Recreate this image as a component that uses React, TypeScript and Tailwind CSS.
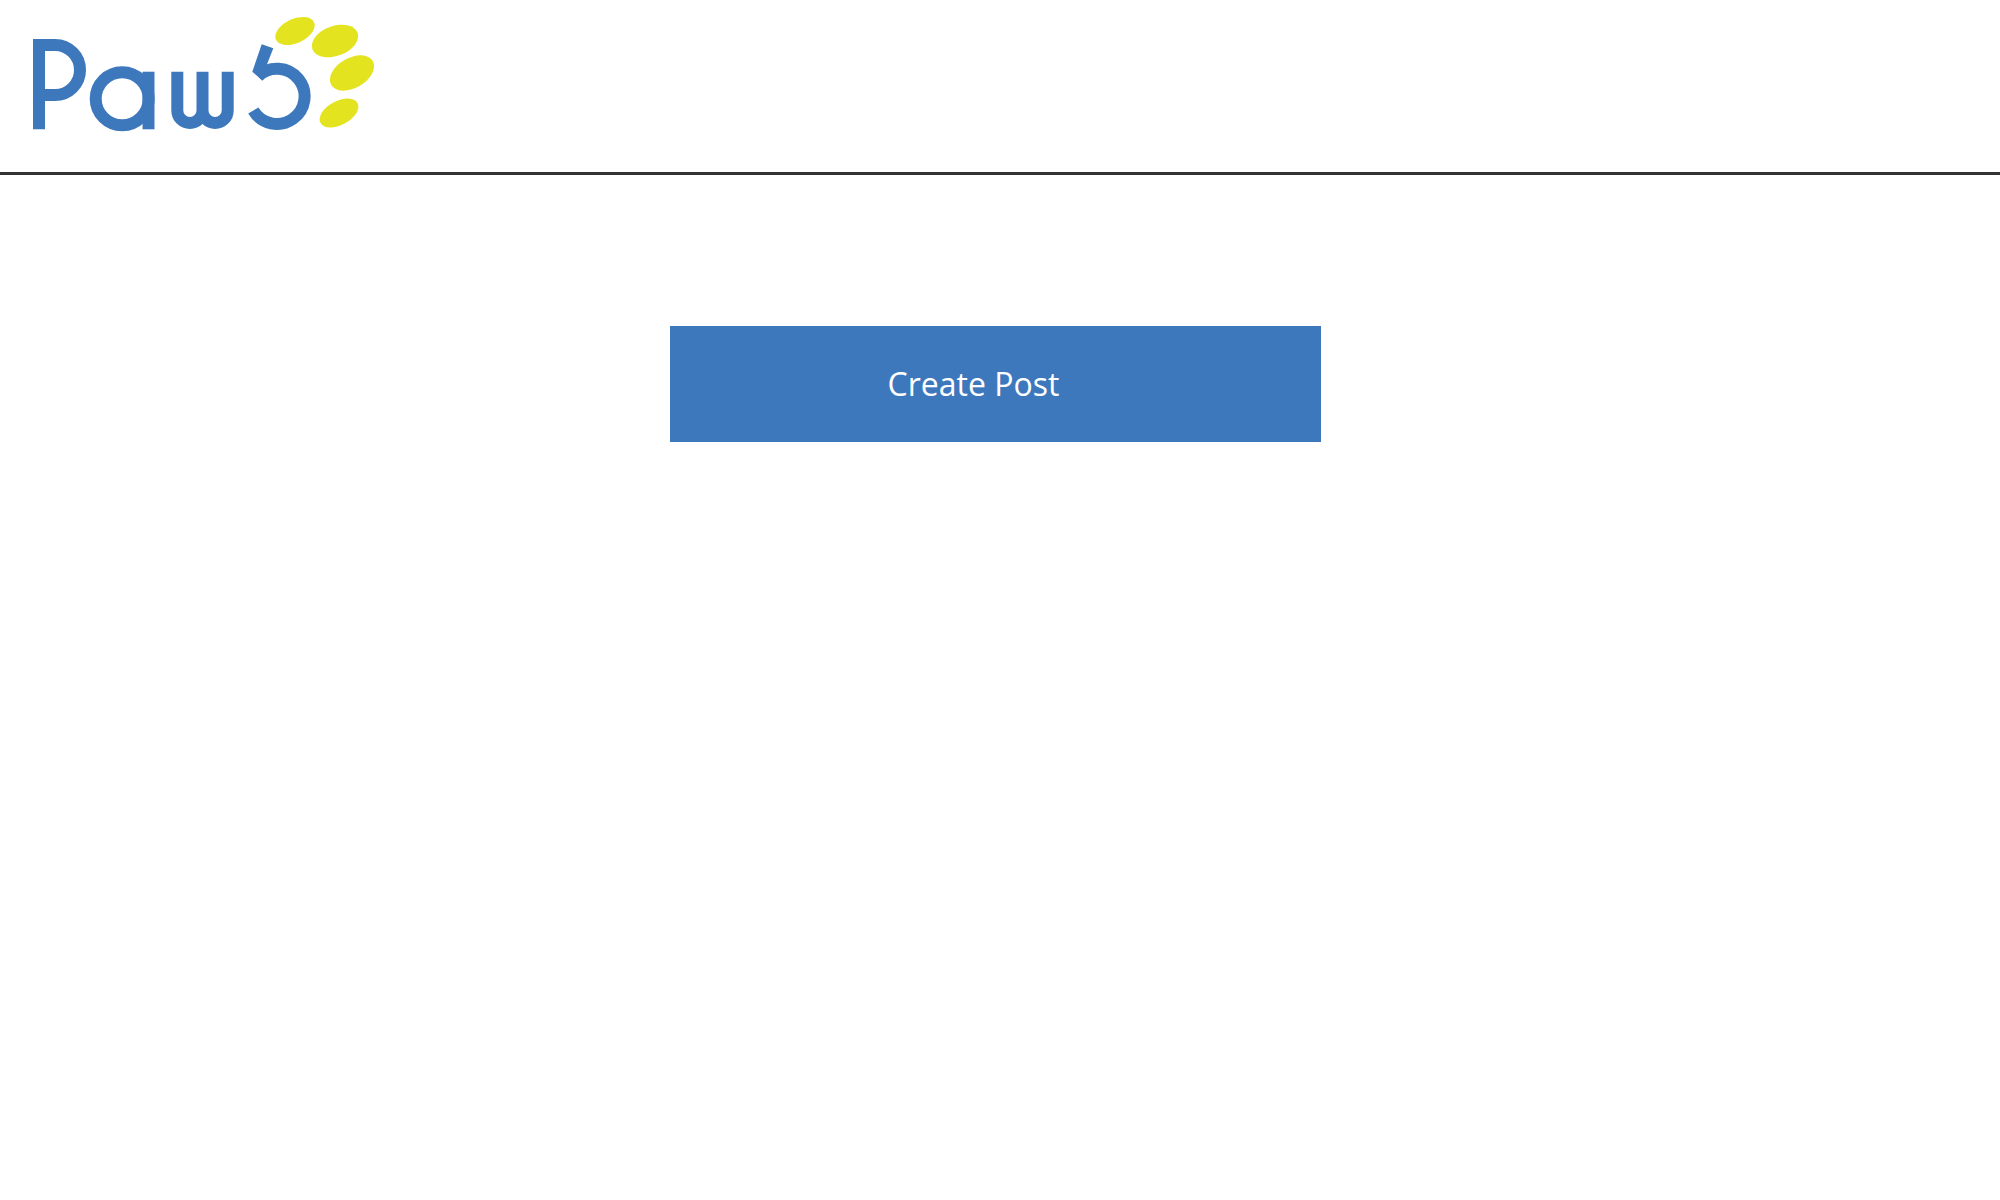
const Logo = () => (
  <svg width="400" height="172" viewBox="0 0 400 172" fill="none" role="img" aria-label="Paw5">
    <g stroke="#3e78bc" strokeWidth="12">
      {/* P */}
      <path d="M39 129.3V45H55A25 25 0 0 1 55 95H39" />
      {/* a */}
      <circle cx="122.2" cy="98.8" r="26.5" />
      <path d="M148.5 71.7V129.3" />
      {/* w */}
      <path d="M177.3 71.7V110.4A12.6 12.6 0 0 0 202.5 110.4V71.7M202.5 110.4A12.6 12.6 0 0 0 227.7 110.4V71.7" />
      {/* 5 bowl */}
      <path d="M258 76.3A27.6 27.6 0 1 1 253.3 110.5" />
    </g>
    {/* 5 tick */}
    <polygon points="261.7,44.3 273.3,48.3 264,72 260.7,79 252.3,71.7" fill="#3e78bc" />
    {/* paw pads */}
    <g fill="#e3e41f">
      <ellipse cx="295" cy="31" rx="21" ry="12" transform="rotate(-25 295 31)" />
      <ellipse cx="335" cy="41" rx="24" ry="15" transform="rotate(-20 335 41)" />
      <ellipse cx="352" cy="73" rx="24" ry="15" transform="rotate(-30 352 73)" />
      <ellipse cx="339" cy="113" rx="21" ry="12" transform="rotate(-28 339 113)" />
    </g>
  </svg>
);

export default function App() {
  return (
    <div className="min-h-screen bg-white font-['Open_Sans',sans-serif]">
      <header className="h-[175px] border-b-[3px] border-[#333333]">
        <Logo />
      </header>
      <main className="pt-[151px] pl-[670px]">
        <button className="flex h-[116px] w-[651px] items-center justify-center bg-[#3e78bc] pr-[44px] text-[32px] text-white">
          Create Post
        </button>
      </main>
    </div>
  );
}
